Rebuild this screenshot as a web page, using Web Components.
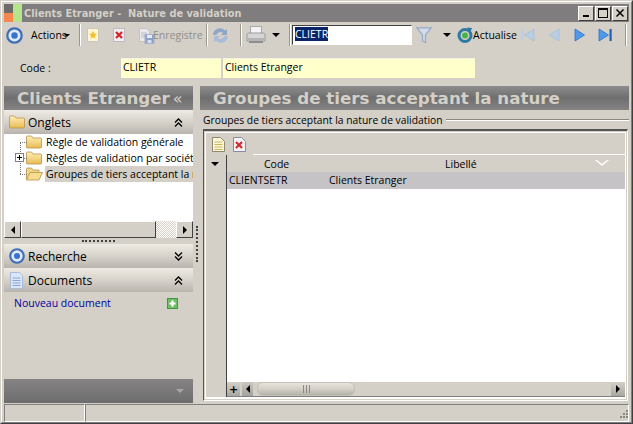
<!DOCTYPE html>
<html><head><meta charset="utf-8"><title>Clients Etranger</title>
<style>
html,body{margin:0;padding:0;background:#d4d0c8;overflow:hidden}
body{width:633px;height:424px;font:10.5px "Open Sans","Noto Sans",sans-serif;color:#000}
</style></head><body>
<x-window></x-window>
<script>
const ICONS={
target:s=>`<svg width="${s}" height="${s}" viewBox="0 0 18 18"><circle cx="9" cy="9" r="7.600" fill="#dfe8f6" stroke="#3f6fb7" stroke-width="2.400"/><circle cx="9" cy="9" r="3.400" fill="#3574c9"/></svg>`,
newdoc:`<svg width="16" height="16" viewBox="0 0 16 16"><rect x="2.500" y="1.500" width="11" height="13" fill="#fdf6d0" stroke="#c9c6bd"/><path d="M8 4l1.300 2.600 2.700.3-2 1.900.5 2.700L8 10.200 5.500 11.500l.5-2.700-2-1.900 2.700-.3z" fill="#f1c232"/></svg>`,
deldoc:`<svg width="16" height="16" viewBox="0 0 16 16"><rect x="2.500" y="1.500" width="11" height="13" fill="#f3eef0" stroke="#bdb8c4"/><path d="M5 5l6 6M11 5l-6 6" stroke="#d8222a" stroke-width="2.200"/></svg>`,
save:`<svg width="17" height="17" viewBox="0 0 17 17"><path d="M1.500 1.500h7l3 3v10h-10z" fill="#e9e9ea" stroke="#c4c4c8"/><path d="M3 6h6M3 8h6M3 10h6" stroke="#b9c0cf"/><rect x="7" y="7.500" width="9" height="9" fill="#8ea0c4" stroke="#a8b2cb"/><rect x="9" y="8" width="5" height="3" fill="#e8ecf4"/><rect x="9.500" y="13" width="4" height="3" fill="#d9deea"/></svg>`,
refresh:`<svg width="19" height="19" viewBox="0 0 19 19"><path d="M2 9a7 7 0 0 1 12-4.500l2-1.500v6h-6l2-2a4 4 0 0 0-6.500 2z" fill="#8fa6c8"/><path d="M17 10a7 7 0 0 1-12 4.500L3 16v-6h6l-2 2a4 4 0 0 0 6.500-2z" fill="#a9bbd6"/></svg>`,
printer:`<svg width="22" height="20" viewBox="0 0 22 20"><rect x="5.500" y="1.500" width="11" height="7" fill="#f4f4f4" stroke="#a9a9a9"/><path d="M2 9.500q0-1.500 2-1.500h14q2 0 2 1.500v6.500H2z" fill="#d6d6d6" stroke="#9b9b9b"/><rect x="3" y="13" width="16" height="2" fill="#b5b5b5"/><rect x="4" y="16" width="14" height="2" fill="#8f8f8f"/></svg>`,
funnel:`<svg width="16" height="17" viewBox="0 0 16 17"><path d="M.8.800h14.400L9.500 8v7.500L6.500 14V8z" fill="#d4dbe8" stroke="#94a7c5" stroke-width="1.200"/></svg>`,
actualise:`<svg width="18" height="18" viewBox="0 0 18 18"><circle cx="8" cy="9.500" r="6" fill="none" stroke="#2f7aa0" stroke-width="3"/><circle cx="8" cy="9.500" r="3" fill="#46b545"/><path d="M10 1.500l5 .5-2 5z" fill="#2f7aa0"/></svg>`,
first:`<svg width="14" height="14" viewBox="0 0 14 14"><rect x=".5" y="1" width="2" height="12" fill="#b9cde4"/><path d="M13 1v12L3.500 7z" fill="#b9cde4" stroke="#a4bad6" stroke-width=".7"/></svg>`,
prev:`<svg width="12" height="14" viewBox="0 0 12 14"><path d="M11 1v12L1.500 7z" fill="#b9cde4" stroke="#a4bad6" stroke-width=".7"/></svg>`,
next:`<svg width="12" height="14" viewBox="0 0 12 14"><path d="M1 1v12L10.500 7z" fill="#4d9bea" stroke="#2f6fc0" stroke-width=".8"/></svg>`,
last:`<svg width="15" height="14" viewBox="0 0 15 14"><path d="M1 1v12L10.500 7z" fill="#4d9bea" stroke="#2f6fc0" stroke-width=".8"/><rect x="11.500" y="1" width="2.200" height="12" fill="#1f5fb5"/></svg>`,
folder:`<svg width="16" height="14" viewBox="0 0 16 14"><defs><linearGradient id="f" x1="0" y1="0" x2="0" y2="1"><stop offset="0" stop-color="#fff0b8"/><stop offset="1" stop-color="#e8bb55"/></linearGradient></defs><path d="M.5 2q0-1 1-1h4l1.500 2h7.500q1 0 1 1v8q0 1-1 1h-13q-1 0-1-1z" fill="url(#f)" stroke="#b8924a" stroke-width=".8"/></svg>`,
folderOpen:`<svg width="17" height="14" viewBox="0 0 17 14"><path d="M.5 13V2q0-1 1-1h4l1.500 2h6v2" fill="#f0d68a" stroke="#b8924a" stroke-width=".8"/><path d="M.5 13L4 5.500h12.500L13 13z" fill="#f7dd8f" stroke="#b8924a" stroke-width=".8"/></svg>`,
doc:`<svg width="13" height="17" viewBox="0 0 13 17"><path d="M.5.500h9l3 3v13H.5z" fill="#dbe6f8" stroke="#aabbd8"/><path d="M2.500 6h8M2.500 8.500h8M2.500 11h8M2.500 13.500h8" stroke="#8aa6dc"/></svg>`,
plus:`<svg width="11" height="11" viewBox="0 0 11 11"><rect width="11" height="11" fill="#3c9a3c"/><rect x="1" y="1" width="9" height="9" fill="#6fbf67"/><path d="M5.500 2.500v6M2.500 5.500h6" stroke="#fff" stroke-width="2.200"/></svg>`,
up:`<svg width="9" height="9" viewBox="0 0 9 9" fill="none" stroke="#000" stroke-width="1.300"><path d="M1 4.500L4.500 1 8 4.500M1 8.500L4.500 5 8 8.500"/></svg>`,
down:`<svg width="9" height="9" viewBox="0 0 9 9" fill="none" stroke="#000" stroke-width="1.300"><path d="M1 .5L4.500 4 8 .5M1 4.500L4.500 8 8 4.500"/></svg>`,
gnote:`<svg width="13" height="15" viewBox="0 0 13 15"><path d="M.5.500h8l4 4v10H.5z" fill="#fdf9d8" stroke="#8d8a70"/><path d="M2.500 5h8M2.500 7.500h8M2.500 10h8M2.500 12.500h8" stroke="#c9b65a"/></svg>`,
gdel:`<svg width="13" height="15" viewBox="0 0 13 15"><path d="M.5.500h8l4 4v10H.5z" fill="#f6f0f2" stroke="#8d89a0"/><path d="M3 5l6 6M9 5l-6 6" stroke="#d8222a" stroke-width="2"/></svg>`
};
function def(name,css,html){
  customElements.define(name,class extends HTMLElement{
    constructor(){super();const r=this.attachShadow({mode:'open'});r.innerHTML=`<style>${css}</style>`+(typeof html==='function'?html(this):html);}
  });
}
const tri=(d,c='#000',s=4)=>{const b={l:`border-right:${s}px solid ${c}`,r:`border-left:${s}px solid ${c}`,d:`border-top:${s}px solid ${c}`}[d];
  const o=(d==='d')?`border-left:${s}px solid transparent;border-right:${s}px solid transparent`:`border-top:${s}px solid transparent;border-bottom:${s}px solid transparent`;
  return `<i style="display:block;width:0;height:0;${b};${o}"></i>`};

def('x-titlebar',`:host{display:flex;align-items:center;height:18px;background:#7f7d7d;color:#d4d0c8;font:bold 9.8px "DejaVu Sans",sans-serif}
.logo{width:18px;height:18px;display:grid;grid-template-columns:1fr 1fr;grid-template-rows:9px 9px;margin-right:2px}
.t{white-space:pre}.sp{flex:1}
.btns{display:flex;margin-right:1px}
.b{width:16px;height:15px;background:#d4d0c8;border:1px solid;border-color:#fff #404040 #404040 #fff;box-sizing:border-box;display:grid;place-items:center}
.b+.b{margin-left:1px}`,
`<span class="logo"><i style="background:#6d6b6b"></i><i style="background:#b4e58a;grid-row:1/3;grid-column:2"></i><i style="background:#f5874f"></i></span><span class="t">Clients Etranger -  Nature de validation</span><span class="sp"></span>
<span class="btns"><span class="b"><svg width="10" height="10"><rect x="2" y="7" width="6" height="2"/></svg></span><span class="b"><svg width="10" height="10" fill="none" stroke="#000"><rect x=".5" y=".5" width="9" height="9"/><path d="M0 1.500h10"/></svg></span><span class="b"><svg width="10" height="10" stroke="#000" stroke-width="1.500"><path d="M1.500 1.500l7 7M8.500 1.500l-7 7"/></svg></span></span>`);

def('x-sep',`:host{display:block;width:2px;height:22px;border-left:1px solid #9a978f;border-right:1px solid #fff;box-sizing:border-box;flex:none}`,``);

def('x-toolbar',`:host{display:flex;align-items:center;height:26px;font:10.5px "Open Sans","Noto Sans",sans-serif}
.a{display:flex;align-items:center;flex:none}
.w{white-space:nowrap;flex:none}
.dis{color:#8f8d89}
.field{flex:none;box-sizing:border-box;width:120px;height:20px;background:#fff;border:1px solid;border-color:#404040 #fff #fff #404040;box-shadow:0 0 0 1px #d4d0c8;line-height:14px;padding:0 2px 2px;display:flex;align-items:center}
.sel{background:#0a246a;color:#fff}`,
()=>`<span class="a" style="margin-left:2px">${ICONS.target(17)}</span>
<span class="w" style="margin-left:8px;width:33px">Actions</span><span class="a" style="width:6px">${tri('d','#000',3)}</span>
<x-sep style="margin-left:9px"></x-sep>
<span class="a" style="margin-left:4px">${ICONS.newdoc}</span>
<span class="a" style="margin-left:10px">${ICONS.deldoc}</span>
<span class="a" style="margin-left:11px">${ICONS.save}</span>
<span class="w dis" style="margin-left:-2px;width:50px">Enregistre</span>
<x-sep style="margin-left:3px"></x-sep>
<span class="a" style="margin-left:3px">${ICONS.refresh}</span>
<x-sep style="margin-left:10px"></x-sep>
<span class="a" style="margin-left:3px">${ICONS.printer}</span>
<span class="a" style="margin-left:5px;width:8px">${tri('d','#000',4)}</span>
<x-sep style="margin-left:9px"></x-sep>
<span class="field" style="margin-left:1px"><span class="sel">CLIETR</span></span>
<span class="a" style="margin-left:4px">${ICONS.funnel}</span>
<span class="a" style="margin-left:11px;width:8px">${tri('d','#000',4)}</span>
<span class="a" style="margin-left:6px">${ICONS.actualise}</span>
<span class="w" style="margin-left:-2px;width:44px">Actualise</span>
<span class="a" style="margin-left:4px">${ICONS.first}</span>
<span class="a" style="margin-left:13px">${ICONS.prev}</span>
<span class="a" style="margin-left:14px">${ICONS.next}</span>
<span class="a" style="margin-left:12px">${ICONS.last}</span>
<x-sep style="margin-left:12px"></x-sep>`);

def('x-coderow',`:host{display:flex;height:38px;align-items:flex-start;font:10.5px "Open Sans",sans-serif;padding-top:10px;box-sizing:border-box}
.l{padding-left:16px;box-sizing:border-box;line-height:21px}
.f{height:20px;background:#ffffcc;padding:0 2px;box-sizing:border-box;line-height:16px;border-top:1px solid #f4f2e4;display:block}`,
`<span class="l" style="width:117px">Code :</span><span class="f" style="width:100px">CLIETR</span><span class="f" style="width:252px;margin-left:2px">Clients Etranger</span>`);

def('x-header',`:host{display:flex;align-items:center;height:24px;background:linear-gradient(#8e8c8c,#706f6f 50%,#858383);color:#d4d0c8;font:bold 16.7px "DejaVu Sans",sans-serif;white-space:nowrap;overflow:hidden}`,`<slot></slot>`);

def('x-band',`:host{display:flex;align-items:center;height:24px;background:linear-gradient(#eeebe4,#d4d0c8 55%,#b9b5ae);font:12px "Open Sans",sans-serif;padding:0 10px 0 5px;box-sizing:border-box;gap:3px}
.t{flex:1}`,()=>`<slot name="i"></slot><span class="t"><slot></slot></span><slot name="c"></slot>`);

def('x-hscroll',`:host{display:flex;height:17px;background:#d4d0c8}
.btn{width:17px;height:17px;box-sizing:border-box;background:#d4d0c8;border:1px solid;border-color:#fff #404040 #404040 #fff;display:grid;place-items:center}
.th{width:135px;box-sizing:border-box;background:#d4d0c8;border:1px solid;border-color:#fff #404040 #404040 #fff}
.tr{flex:1;background:repeating-conic-gradient(#fff 0 25%,#d4d0c8 0 50%) 0 0/2px 2px}`,
()=>`<span class="btn">${tri('l')}</span><span class="th"></span><span class="tr"></span><span class="btn">${tri('r')}</span>`);

def('x-tree',`:host{display:block;height:87px;background:#fff;position:relative;overflow:hidden;font:10.5px "Open Sans",sans-serif}
.r{display:flex;align-items:center;height:16px;position:relative;white-space:nowrap}
.ic{margin-left:22px;width:18px;display:flex;flex:none}
.t{margin-left:1px;padding:0 1px}
.sel{background:#d4d0c8;flex:1;height:16px;line-height:16px;min-width:0}
.v{position:absolute;left:16px;top:8px;height:32px;border-left:1px dotted #777}
.h{position:absolute;left:16px;top:8px;width:7px;border-top:1px dotted #777}
.p{position:absolute;left:11px;top:3px;width:9px;height:9px;box-sizing:border-box;border:1px solid #808080;background:#fff;z-index:1}
.p:before{content:"";position:absolute;left:1px;top:3px;width:5px;height:1px;background:#000}
.p:after{content:"";position:absolute;left:3px;top:1px;width:1px;height:5px;background:#000}`,
()=>`<span class="v"></span>
<div class="r"><span class="h"></span><span class="ic">${ICONS.folder}</span><span class="t">Règle de validation générale</span></div>
<div class="r"><span class="h"></span><span class="p"></span><span class="ic">${ICONS.folder}</span><span class="t">Règles de validation par société</span></div>
<div class="r"><span class="h"></span><span class="ic">${ICONS.folderOpen}</span><span class="t sel">Groupes de tiers acceptant la nature</span></div>`);

def('x-side',`:host{display:flex;flex-direction:column;width:189px;flex:none;font:10.5px "Open Sans",sans-serif}
.sp{height:6px;display:flex;justify-content:center;align-items:center;flex:none}
.dots{width:33px;border-top:2px dotted #404040}
.docs{flex:1;padding:4px 15px 0 10px;color:#00009c;display:flex;justify-content:space-between;align-items:flex-start;line-height:15px;min-height:0}
.bottom{height:24px;background:linear-gradient(#858383,#6e6d6d);display:flex;justify-content:flex-end;align-items:center;padding-right:9px;flex:none}
.f{display:flex}`,
()=>`<x-header style="padding-left:13px">Clients Etranger<span style="font-weight:normal;font-size:16px;margin-left:3px">«</span></x-header>
<x-band><span slot="i" class="f">${ICONS.folder}</span>Onglets<span slot="c" class="f">${ICONS.up}</span></x-band>
<x-tree></x-tree><x-hscroll></x-hscroll><div class="sp"><i class="dots"></i></div>
<x-band><span slot="i" class="f">${ICONS.target(16)}</span>Recherche<span slot="c" class="f">${ICONS.down}</span></x-band>
<x-band><span slot="i" class="f" style="margin:0 2px 0 1px">${ICONS.doc}</span>Documents<span slot="c" class="f">${ICONS.up}</span></x-band>
<div class="docs"><span>Nouveau document</span><span style="margin-top:2px;display:flex">${ICONS.plus}</span></div>
<div class="bottom">${tri('d','#a9a7a4',4)}</div>`);

def('x-grid',`:host{display:flex;flex-direction:column;flex:1;margin:0 1px 2px 3px;border:1px solid;border-color:#555 #fff #fff #555;border-top-width:2px;font:10.5px "Open Sans",sans-serif;min-height:0;box-sizing:border-box}
.tools{height:23px;display:flex;align-items:center;gap:8px;padding:2px 0 0 6px;box-sizing:border-box;margin:1px 1px 0 1px;flex:none;position:relative;border:1px solid #fff;border-bottom-color:transparent}
.tools:after{content:"";position:absolute;left:47px;right:0;bottom:-1px;border-top:1px solid #fff}
.body{flex:1;display:flex;min-height:0;margin:0 1px 1px;border:1px solid #fff;border-top:0;border-bottom-width:2px}
.side{width:20px;border-right:1px solid #404040;display:flex;flex-direction:column;flex:none}
.corner{height:18px;display:grid;place-items:center;padding-right:2px}
.main{flex:1;display:flex;flex-direction:column;min-width:0}
.head{height:17px;box-sizing:border-box;position:relative;flex:none}
.h1{position:absolute;left:37px;top:1px;line-height:17px}
.h2{position:absolute;left:218px;top:1px;line-height:17px}
.srt{position:absolute;left:368px;top:5px;width:0;height:0;border-left:7px solid transparent;border-right:7px solid transparent;border-top:6px solid #fff}
.srt:after{content:"";position:absolute;left:-5px;top:-6px;border-left:5px solid transparent;border-right:5px solid transparent;border-top:4px solid #d4d0c8}
.row{height:17px;background:#c5c3c6;display:flex;line-height:17px;padding-left:2px;flex:none}
.white{flex:1;background:#fff;min-height:0}
.sb{height:14px;display:flex;background:#d4d0c8;flex:none;align-items:stretch;border-bottom:1px solid #808080}
.btn{width:11px;background:linear-gradient(#c9c7c0,#a3a19b);display:grid;place-items:center}
.th{width:98px;margin-left:4px;border-radius:6px;background:linear-gradient(#e8e5de,#d4d0c8 50%,#b4b1a9);border:1px solid #c2bfb7;box-sizing:border-box;display:flex;justify-content:center;align-items:center;gap:2px}
.th i{width:1px;height:8px;background:#8b8983}
.pl{width:13px;background:linear-gradient(#d4d0c8,#a9a7a1);display:grid;place-items:center;font:bold 11px "DejaVu Sans",sans-serif;margin-right:2px}`,
()=>`<div class="tools"><span style="display:flex">${ICONS.gnote}</span><span style="display:flex">${ICONS.gdel}</span></div>
<div class="body"><div class="side"><div class="corner">${tri('d','#000',4)}</div></div>
<div class="main"><div class="head"><span class="h1">Code</span><span class="h2">Libellé</span><span class="srt"></span></div>
<div class="row"><span style="width:100px">CLIENTSETR</span><span>Clients Etranger</span></div>
<div class="white"></div>
<div class="sb"><span class="pl">+</span><span class="btn">${tri('l','#000',4)}</span><span class="th"><i></i><i></i><i></i></span><span style="flex:1"></span><span class="btn" style="width:14px;background:linear-gradient(#d4d0c8,#a9a7a1)">${tri('r','#000',4)}</span></div>
</div></div>`);

def('x-right',`:host{display:flex;flex-direction:column;flex:1;min-width:0;font:10.3px "Open Sans",sans-serif}
.lab{height:19px;display:flex;align-items:center;gap:3px;padding-left:3px;flex:none;white-space:nowrap}
.lab i{flex:1;border-top:1px solid #8a8781;border-bottom:1px solid #fff}`,
()=>`<x-header style="padding-left:13px">Groupes de tiers acceptant la nature</x-header>
<div class="lab"><span>Groupes de tiers acceptant la nature de validation</span><i></i></div>
<x-grid></x-grid>`);

def('x-status',`:host{display:flex;height:18px;box-sizing:border-box;position:relative;margin-top:1px}
.c{border:1px solid;border-color:#808080 #fff #fff #808080;box-sizing:border-box;height:18px}
.g{position:absolute;right:0;bottom:1px}`,
`<span class="c" style="width:81px"></span><span class="c" style="flex:1"></span><svg class="g" width="12" height="12" fill="#8a8781"><rect x="9" y="1" width="2" height="2"/><rect x="6" y="4" width="2" height="2"/><rect x="9" y="4" width="2" height="2"/><rect x="3" y="7" width="2" height="2"/><rect x="6" y="7" width="2" height="2"/><rect x="9" y="7" width="2" height="2"/></svg>`);

def('x-window',`:host{display:flex;flex-direction:column;width:633px;height:424px;box-sizing:border-box;background:#d4d0c8;border:1px solid;border-color:#d4d0c8 #404040 #404040 #d4d0c8}
.in{flex:1;display:flex;flex-direction:column;border:1px solid;border-color:#fff #808080 #808080 #fff;padding:2px 2px 0 2px;min-height:0}
.main{display:flex;flex:1;min-height:0}
.split{width:7px;flex:none;position:relative}
.split i{position:absolute;left:3px;top:140px;height:36px;border-left:2px dotted #404040}`,
`<div class="in"><x-titlebar></x-titlebar><x-toolbar></x-toolbar><x-coderow></x-coderow>
<div class="main"><x-side></x-side><div class="split"><i></i></div><x-right></x-right></div>
<x-status></x-status></div>`);
</script>
</body></html>
